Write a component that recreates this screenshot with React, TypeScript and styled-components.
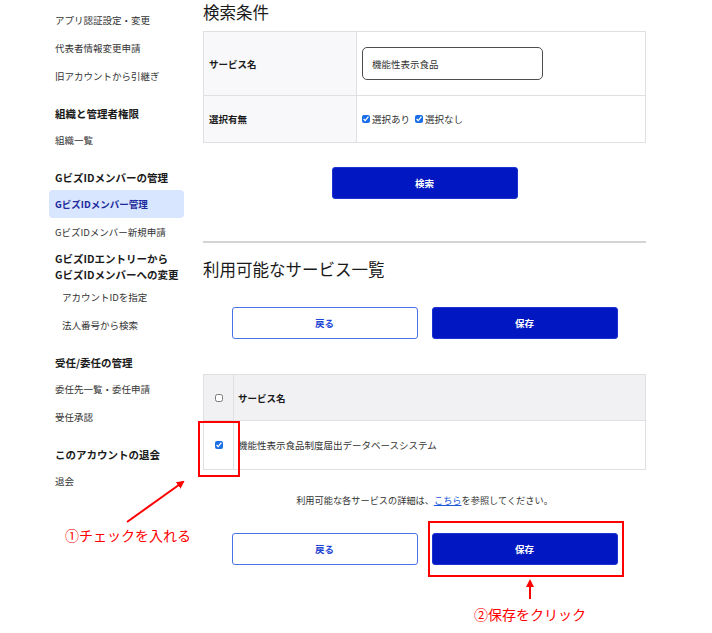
import styled, { createGlobalStyle } from "styled-components";

const GlobalStyle = createGlobalStyle`
	html, body {
		margin: 0;
		padding: 0;
		background: #fff;
	}
	body {
		font-family: "Noto Sans CJK JP", "Noto Sans", sans-serif;
		color: #1a1a1a;
	}
`;

const Page = styled.div`
	position: relative;
	width: 712px;
	height: 633px;
	display: flex;
	gap: 19px;
	padding-left: 49px;
	box-sizing: border-box;
	overflow: hidden;
`;

const Side = styled.nav`
	width: 135px;
	padding-top: 6px;
	display: flex;
	flex-direction: column;
`;

const NavItem = styled.div<{ active?: boolean; sub?: boolean }>`
	height: 28px;
	line-height: 28px;
	padding-left: ${(p) => (p.sub ? "13px" : "6px")};
	font-size: 9.5px;
	border-radius: 4px;
	color: ${(p) => (p.active ? "#1b2a9c" : "#333")};
	font-weight: ${(p) => (p.active ? 700 : 400)};
	background: ${(p) => (p.active ? "#d9e6ff" : "transparent")};
	white-space: nowrap;
`;

const NavHead = styled.div<{ tight?: boolean }>`
	margin-top: ${(p) => (p.tight ? "5px" : "12px")};
	min-height: 24px;
	line-height: ${(p) => (p.tight ? "16px" : "24px")};
	padding-left: 6px;
	font-size: 10.5px;
	font-weight: 700;
	color: #1a1a1a;
	white-space: nowrap;
`;

const Main = styled.main`
	width: 443px;
	display: flex;
	flex-direction: column;
`;

const Heading = styled.h2<{ top?: number }>`
	margin: ${(p) => p.top ?? 0}px 0 0;
	height: 24px;
	line-height: 24px;
	font-size: 16.5px;
	font-weight: 400;
	color: #1a1a1a;
`;

const FormTable = styled.div`
	margin-top: 7px;
	display: grid;
	grid-template-columns: 153px 1fr;
	border: 1px solid #e0e0e3;
	border-bottom: none;
`;

const LabelCell = styled.div<{ h: number }>`
	height: ${(p) => p.h}px;
	background: #f8f8fa;
	border-right: 1px solid #e0e0e3;
	border-bottom: 1px solid #e0e0e3;
	display: flex;
	align-items: center;
	padding-left: 5px;
	font-size: 9.5px;
	font-weight: 700;
	box-sizing: border-box;
`;

const ValueCell = styled.div<{ h: number }>`
	height: ${(p) => p.h}px;
	border-bottom: 1px solid #e0e0e3;
	display: flex;
	align-items: center;
	padding-left: 5px;
	gap: 4px;
	font-size: 9.5px;
	box-sizing: border-box;
`;

const TextInput = styled.div`
	width: 181px;
	height: 33px;
	box-sizing: border-box;
	border: 1px solid #4d4d4d;
	border-radius: 5px;
	padding-left: 9px;
	display: flex;
	align-items: center;
	font-size: 9.5px;
	color: #333;
`;

const Check = styled.input.attrs({ type: "checkbox", readOnly: true })`
	width: 8px;
	height: 8px;
	margin: 0;
	accent-color: #1a6ee8;
`;

const CheckLabel = styled.label`
	display: flex;
	align-items: center;
	gap: 2px;
	margin-right: 1px;
	font-size: 9.5px;
	color: #333;
`;

const ButtonRow = styled.div<{ top: number }>`
	margin-top: ${(p) => p.top}px;
	display: flex;
	justify-content: center;
	gap: 14px;
`;

const Button = styled.div<{ outline?: boolean }>`
	width: 186px;
	height: 32px;
	box-sizing: border-box;
	border-radius: 3px;
	display: flex;
	align-items: center;
	justify-content: center;
	font-size: 9.5px;
	font-weight: 700;
	background: ${(p) => (p.outline ? "#fff" : "#0017c1")};
	color: ${(p) => (p.outline ? "#1f47d6" : "#fff")};
	border: 1px solid ${(p) => (p.outline ? "#4a72e8" : "#1a33d0")};
`;

const Divider = styled.hr`
	margin: 42px 0 0;
	border: none;
	border-top: 2px solid #d4d4d4;
`;

const ListTable = styled.div`
	margin-top: 35px;
	display: grid;
	grid-template-columns: 30px 1fr;
	border: 1px solid #e0e0e3;
	border-bottom: none;
`;

const HeadCell = styled.div<{ first?: boolean }>`
	height: 46px;
	background: #f1f1f4;
	border-bottom: 1px solid #e0e0e3;
	border-right: ${(p) => (p.first ? "1px solid #e0e0e3" : "none")};
	display: flex;
	align-items: center;
	justify-content: ${(p) => (p.first ? "center" : "flex-start")};
	padding-left: ${(p) => (p.first ? 0 : "4px")};
	font-size: 9.5px;
	font-weight: 700;
	box-sizing: border-box;
`;

const BodyCell = styled.div<{ first?: boolean }>`
	height: 49px;
	border-bottom: 1px solid #e0e0e3;
	border-right: ${(p) => (p.first ? "1px solid #e0e0e3" : "none")};
	display: flex;
	align-items: center;
	justify-content: ${(p) => (p.first ? "center" : "flex-start")};
	padding-left: ${(p) => (p.first ? 0 : "4px")};
	font-size: 9.5px;
	color: #333;
	box-sizing: border-box;
`;

const Note = styled.p`
	margin: 21px 0 0;
	text-align: center;
	font-size: 9.2px;
	line-height: 18px;
	color: #333;
`;

const Link = styled.a`
	color: #1a5adb;
	text-decoration: underline;
`;

const Frame = styled.div<{ x: number; y: number; w: number; h: number }>`
	position: absolute;
	left: ${(p) => p.x}px;
	top: ${(p) => p.y}px;
	width: ${(p) => p.w}px;
	height: ${(p) => p.h}px;
	border: 2px solid #f00;
	box-sizing: border-box;
	pointer-events: none;
`;

const Callout = styled.div<{ x: number; y: number }>`
	position: absolute;
	left: ${(p) => p.x}px;
	top: ${(p) => p.y}px;
	font-family: "Noto Sans CJK JP", sans-serif;
	font-size: 14px;
	line-height: 20px;
	color: #f00;
	white-space: nowrap;
`;

const Arrows = styled.svg`
	position: absolute;
	left: 0;
	top: 0;
	pointer-events: none;
`;

export default function App() {
	return (
		<>
			<GlobalStyle />
			<Page>
				<Side>
					<NavItem>アプリ認証設定・変更</NavItem>
					<NavItem>代表者情報変更申請</NavItem>
					<NavItem>旧アカウントから引継ぎ</NavItem>
					<NavHead>組織と管理者権限</NavHead>
					<NavItem>組織一覧</NavItem>
					<NavHead>GビズIDメンバーの管理</NavHead>
					<NavItem active>GビズIDメンバー管理</NavItem>
					<NavItem>GビズIDメンバー新規申請</NavItem>
					<NavHead tight>
						GビズIDエントリーから
						<br />
						GビズIDメンバーへの変更
					</NavHead>
					<NavItem sub>アカウントIDを指定</NavItem>
					<NavItem sub>法人番号から検索</NavItem>
					<NavHead>受任/委任の管理</NavHead>
					<NavItem>委任先一覧・委任申請</NavItem>
					<NavItem>受任承認</NavItem>
					<NavHead>このアカウントの退会</NavHead>
					<NavItem>退会</NavItem>
				</Side>

				<Main>
					<Heading>検索条件</Heading>
					<FormTable>
						<LabelCell h={64}>サービス名</LabelCell>
						<ValueCell h={64}>
							<TextInput>機能性表示食品</TextInput>
						</ValueCell>
						<LabelCell h={47}>選択有無</LabelCell>
						<ValueCell h={47}>
							<CheckLabel>
								<Check checked />
								選択あり
							</CheckLabel>
							<CheckLabel>
								<Check checked />
								選択なし
							</CheckLabel>
						</ValueCell>
					</FormTable>
					<ButtonRow top={24}>
						<Button>検索</Button>
					</ButtonRow>

					<Divider />
					<Heading top={14}>利用可能なサービス一覧</Heading>
					<ButtonRow top={26}>
						<Button outline>戻る</Button>
						<Button>保存</Button>
					</ButtonRow>

					<ListTable>
						<HeadCell first>
							<Check checked={false} />
						</HeadCell>
						<HeadCell>サービス名</HeadCell>
						<BodyCell first>
							<Check checked />
						</BodyCell>
						<BodyCell>機能性表示食品制度届出データベースシステム</BodyCell>
					</ListTable>

					<Note>
						利用可能な各サービスの詳細は、<Link>こちら</Link>を参照してください。
					</Note>
					<ButtonRow top={24}>
						<Button outline>戻る</Button>
						<Button>保存</Button>
					</ButtonRow>
				</Main>

				<Frame x={198} y={421} w={42} h={56} />
				<Frame x={428} y={521} w={196} h={56} />
				<Arrows width="712" height="633" viewBox="0 0 712 633">
					<defs>
						<marker id="head" markerWidth="8" markerHeight="8" refX="6" refY="4" orient="auto" markerUnits="userSpaceOnUse">
							<path d="M0 0 L8 4 L0 8 Z" fill="#f00" />
						</marker>
					</defs>
					<line x1="127" y1="522" x2="183" y2="482" stroke="#f00" strokeWidth="2" markerEnd="url(#head)" />
					<line x1="530" y1="599" x2="530" y2="581" stroke="#f00" strokeWidth="2" markerEnd="url(#head)" />
				</Arrows>
				<Callout x={65} y={525}>①チェックを入れる</Callout>
				<Callout x={474} y={604}>②保存をクリック</Callout>
			</Page>
		</>
	);
}
